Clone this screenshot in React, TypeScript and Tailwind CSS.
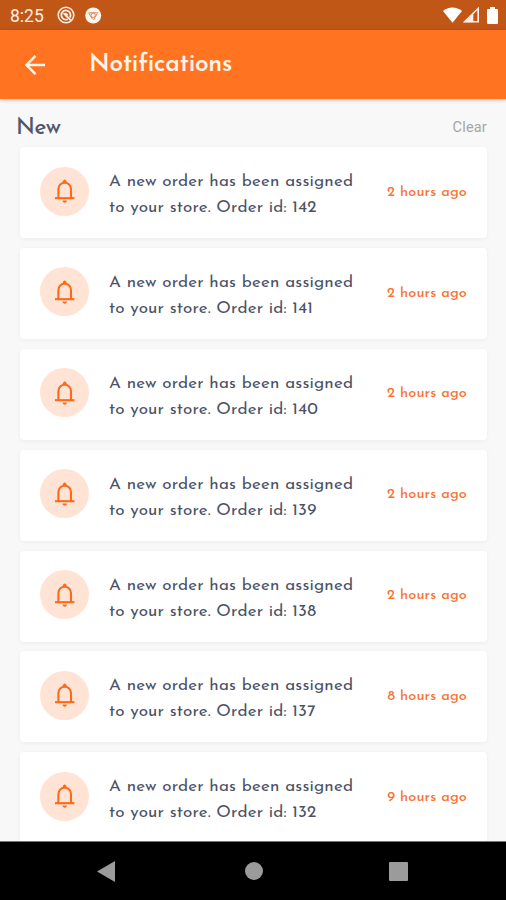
import React from 'react';

interface Notification {
  id: number;
  time: string;
}

const notifications: Notification[] = [
  { id: 142, time: '2 hours ago' },
  { id: 141, time: '2 hours ago' },
  { id: 140, time: '2 hours ago' },
  { id: 139, time: '2 hours ago' },
  { id: 138, time: '2 hours ago' },
  { id: 137, time: '8 hours ago' },
  { id: 132, time: '9 hours ago' },
];

const BellIcon: React.FC = () => (
  <svg width="20" height="24" viewBox="0 0 20 24" fill="none" stroke="#fb6a1b" strokeWidth="2.1">
    <path d="M3.4 19V10.2C3.4 6 6.3 3.8 9.7 3.8s6.3 2.2 6.3 6.4V19" />
    <path d="M0 19.2h19.4" />
    <path d="M7.6 3.8C7.6 1.8 8.6.4 9.7.4s2.1 1.4 2.1 3.4zM7.5 21.6h4.4c0 1.3-1 2.2-2.2 2.2s-2.2-.9-2.2-2.2z" fill="#fb6a1b" stroke="none" />
  </svg>
);

const StatusBar: React.FC = () => (
  <div className="flex h-[30px] shrink-0 items-center bg-[#c15717] pr-[8px] pl-[10px] text-white">
    <span className="w-[47px] pt-px font-[Roboto,sans-serif] text-[17.5px] leading-[30px] text-[#ffeee5]">8:25</span>
    <svg width="18" height="18" viewBox="0 0 18 18" fill="none" stroke="#ffeee5">
      <circle cx="9" cy="9" r="7.8" strokeWidth="1.6" />
      <path d="M12.8 11.5A4.6 4.6 0 1 0 10.8 13.2" strokeWidth="1.8" />
      <path d="M6.5 8.2c1.6-1 3.4-.4 4 1.3M8 8.8l6 5.6" strokeWidth="1.9" />
    </svg>
    <svg className="ml-[10px]" width="17" height="17" viewBox="0 0 17 17" fill="none">
      <circle cx="8.2" cy="8.5" r="8" fill="#fff4ee" />
      <path d="M3.5 5.8h9.3M12.2 6.3 8.6 13M3.8 6.2l3.6 6" stroke="#d98a5e" strokeWidth="1" />
      <circle cx="8.2" cy="8.3" r="2.2" stroke="#d98a5e" strokeWidth="1" />
    </svg>
    <div className="ml-auto flex items-center">
      <svg width="19" height="16" viewBox="0 0 19 16" fill="currentColor">
        <path d="M0 4C5.2-.7 13.8-.7 19 4L9.5 15.7z" />
      </svg>
      <svg className="ml-[1px]" width="17" height="16" viewBox="0 0 17 16" fill="none" stroke="#ffeee5">
        <path d="M1.5 14.8 15.2 1.5v13.3z" strokeWidth="1.6" />
        <path d="M9.5 7.5v7" strokeWidth="1.6" />
        <path d="M1 15.3 9.5 7v8.3z" fill="#ffeee5" stroke="none" />
      </svg>
      <svg className="ml-[7px]" width="11" height="17" viewBox="0 0 11 17" fill="currentColor">
        <path d="M3 0h5v2h2q1 0 1 1v13q0 1-1 1H1q-1 0-1-1V3q0-1 1-1h2z" />
      </svg>
    </div>
  </div>
);

const NotificationCard: React.FC<{ item: Notification }> = ({ item }) => (
  <div className="flex h-[91px] shrink-0 items-center rounded-[4px] bg-white px-5 shadow-[0_1px_4px_rgba(0,0,0,0.05)]">
    <div className="mb-[3px] flex h-[49px] w-[49px] shrink-0 items-center justify-center rounded-full bg-[#ffe4d5]">
      <BellIcon />
    </div>
    <div className="mb-[-5px] ml-5 text-[17px] leading-[26px] whitespace-nowrap text-[#4b5166]">
      <p className="tracking-[0.18px]">A new order has been assigned</p>
      <p className="tracking-[0.18px]">to your store. Order id: {item.id}</p>
    </div>
    <span className="ml-auto text-[14.5px] font-medium tracking-[0.15px] whitespace-nowrap text-[#f97331]">{item.time}</span>
  </div>
);

const App: React.FC = () => {
  return (
    <div className="flex h-[900px] w-[506px] flex-col overflow-hidden bg-[#f8f8f8] font-['Josefin_Sans',Lato,sans-serif]">
      <StatusBar />

      <header className="z-10 flex h-[69px] shrink-0 items-center bg-[#ff7321] pl-[25px] text-[#fff4e9] shadow-[0_1px_4px_rgba(0,0,0,0.25)]">
        <svg width="20" height="20" viewBox="0 0 20 20" fill="none" stroke="currentColor" strokeWidth="2.4">
          <path d="M20 10H2M10.5.8 1.5 10l9 9.2" />
        </svg>
        <h1 className="ml-[44px] text-[24.5px] leading-7 font-semibold tracking-[-0.2px]">Notifications</h1>
      </header>

      <main className="flex min-h-0 flex-1 flex-col overflow-hidden pr-[19px] pl-5">
        <div className="-ml-1 flex h-12 shrink-0 items-center justify-between pt-[10px]">
          <h2 className="pt-px text-[22.5px] leading-7 font-medium tracking-[-0.4px] text-[#50566b]">New</h2>
          <button className="font-[Roboto,sans-serif] text-[14.5px] tracking-[0.2px] text-[#a5a5a5]">Clear</button>
        </div>
        <div className="flex flex-col gap-[9.9px]">
          {notifications.map((item) => (
            <NotificationCard key={item.id} item={item} />
          ))}
        </div>
      </main>

      <nav className="z-10 flex h-[59px] shrink-0 items-center border-t border-[#777] bg-black pl-[97px] text-[#9b9b9b]">
        <svg width="18" height="21" viewBox="0 0 18 21" fill="currentColor">
          <path d="M18 0v21L0 10.5z" />
        </svg>
        <div className="ml-[130px] h-[18px] w-[18px] rounded-full bg-[#9b9b9b]" />
        <div className="ml-[126px] h-[19px] w-[19px] rounded-[1px] bg-[#9b9b9b]" />
      </nav>
    </div>
  );
};

export default App;
